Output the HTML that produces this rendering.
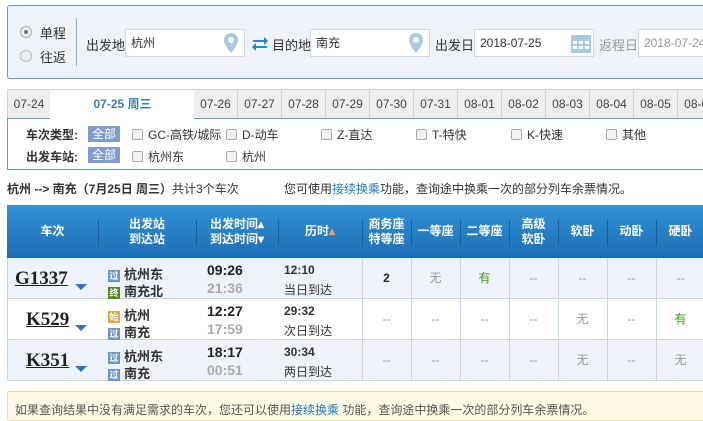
<!DOCTYPE html><html><head><meta charset="utf-8"><style>
*{margin:0;padding:0;box-sizing:border-box}
body{width:703px;height:418px;overflow:hidden;background:#fff;font-family:"Liberation Sans","Noto Sans CJK SC",sans-serif;font-size:12px;color:#333;position:relative}
.a{position:absolute;white-space:nowrap}
.inp{position:absolute;height:28px;border:1px solid #cfd8e3;background:#fff;font-size:12px;line-height:26px;padding-left:5px;color:#333}
.tab{position:absolute;top:89px;height:30px;border:1px solid #c9d3dd;border-left:none;background:#eee;width:44px;text-align:center;line-height:28px;color:#444;font-size:12px}
.cb{display:inline-block;width:11px;height:11px;border:1px solid #aaa;border-radius:2px;background:#f2f2f2;vertical-align:-1px;margin-right:5px}
.badge{position:absolute;background:#7f9bd0;color:#fff;width:32px;height:16px;line-height:16px;text-align:center;font-size:12px}
.hd{position:absolute;top:205px;height:53px;color:#fff;font-weight:bold;font-size:12px;text-align:center;line-height:15px;display:flex;align-items:center;justify-content:center}
.sep{position:absolute;top:220px;height:26px;width:1px;background:#1a5f9a}
.row{position:absolute;left:7px;width:700px;height:41px;border-bottom:1px solid #c8d6e4}
.cell{position:absolute;text-align:center;width:49px;line-height:40px;color:#999;font-size:12px}
.vl{position:absolute;width:1px;background:#c8d6e4;top:258px;height:123px}
.tag{display:inline-block;width:12px;height:12px;font-size:9px;line-height:12px;text-align:center;color:#fff;vertical-align:0px;margin-right:4px}
.tn{position:absolute;font-family:"Liberation Serif",serif;font-weight:bold;font-size:19px;color:#222;text-decoration:underline}
.tri{position:absolute;width:0;height:0;border-left:6px solid transparent;border-right:6px solid transparent;border-top:6px solid #2a78c8}
.t1{position:absolute;font-weight:bold;font-size:14px;color:#222}
.t2{position:absolute;font-weight:bold;font-size:14px;color:#aaa}
</style></head><body>
<div class="a" style="left:7px;top:5px;width:710px;height:74px;background:#eef2f9;border:1px solid #5a9cc4;border-radius:3px"></div>
<div class="a" style="left:20px;top:26px;width:12px;height:12px;border-radius:50%;border:1px solid #aaa;background:#eee"></div>
<div class="a" style="left:24px;top:30px;width:4px;height:4px;border-radius:50%;background:#777"></div>
<div class="a" style="left:20px;top:50px;width:12px;height:12px;border-radius:50%;border:1px solid #bbb;background:#eee"></div>
<div class="a" style="left:40px;top:23px;font-size:13px">单程</div>
<div class="a" style="left:40px;top:47px;font-size:13px">往返</div>
<div class="a" style="left:76px;top:18px;width:1px;height:48px;background:#7db0cf"></div>
<div class="a" style="left:86px;top:35px;font-size:13px">出发地</div>
<div class="inp" style="left:125px;top:29px;width:120px">杭州</div>
<svg class="a" style="left:224px;top:33px" width="14" height="20" viewBox="0 0 14 20"><path d="M7 0C3 0 0 3 0 7c0 5 7 13 7 13s7-8 7-13c0-4-3-7-7-7z" fill="#a9c9e3"/><circle cx="7" cy="7" r="3" fill="#fff"/></svg>
<svg class="a" style="left:251px;top:36px" width="18" height="15" viewBox="0 0 18 15"><path d="M2 4h11V1l4 4-4 4V6H2z M16 10H5V7l-4 4 4 4v-3h11z" fill="#1b8ac8"/></svg>
<div class="a" style="left:272px;top:35px;font-size:13px">目的地</div>
<div class="inp" style="left:310px;top:29px;width:120px">南充</div>
<svg class="a" style="left:409px;top:33px" width="14" height="20" viewBox="0 0 14 20"><path d="M7 0C3 0 0 3 0 7c0 5 7 13 7 13s7-8 7-13c0-4-3-7-7-7z" fill="#a9c9e3"/><circle cx="7" cy="7" r="3" fill="#fff"/></svg>
<div class="a" style="left:435px;top:35px;font-size:13px">出发日</div>
<div class="inp" style="left:474px;top:29px;width:120px">2018-07-25</div>
<svg class="a" style="left:571px;top:33px" width="20" height="20" viewBox="0 0 20 20"><rect x="0" y="2" width="20" height="18" fill="#a9c9e3"/><g fill="#fff"><rect x="2" y="8" width="4" height="3"/><rect x="8" y="8" width="4" height="3"/><rect x="14" y="8" width="4" height="3"/><rect x="2" y="13" width="4" height="3"/><rect x="8" y="13" width="4" height="3"/><rect x="14" y="13" width="4" height="3"/></g></svg>
<div class="a" style="left:599px;top:35px;font-size:13px;color:#999">返程日</div>
<div class="inp" style="left:638px;top:29px;width:80px;color:#999">2018-07-24</div>

<div class="tab" style="left:7px;width:44px;border-left:1px solid #c9d3dd">07-24</div>
<div class="a" style="left:50px;top:89px;width:145px;height:31px;background:#fff;border-top:1px solid #c9d3dd;text-align:center;line-height:28px;color:#3a7fb8;font-weight:bold;font-size:12px">07-25 周三</div>
<div class="tab" style="left:194px">07-26</div><div class="tab" style="left:238px">07-27</div><div class="tab" style="left:282px">07-28</div><div class="tab" style="left:326px">07-29</div><div class="tab" style="left:370px">07-30</div><div class="tab" style="left:414px">07-31</div><div class="tab" style="left:458px">08-01</div><div class="tab" style="left:502px">08-02</div><div class="tab" style="left:546px">08-03</div><div class="tab" style="left:590px">08-04</div><div class="tab" style="left:634px">08-05</div><div class="tab" style="left:678px">08-06</div>
<div class="a" style="left:7px;top:118px;width:710px;height:52px;border:1px solid #5a9cc4;border-top:none"></div>
<div class="a" style="left:194px;top:118px;width:520px;height:1px;background:#5a9cc4"></div>
<div class="a" style="left:7px;top:118px;width:43px;height:1px;background:#5a9cc4"></div>
<div class="a" style="left:26px;top:126px;font-weight:bold;font-size:12px">车次类型:</div>
<div class="badge" style="left:88px;top:126px">全部</div>
<div class="a" style="left:132px;top:126px"><span class="cb"></span>GC-高铁/城际</div>
<div class="a" style="left:226px;top:126px"><span class="cb"></span>D-动车</div>
<div class="a" style="left:321px;top:126px"><span class="cb"></span>Z-直达</div>
<div class="a" style="left:416px;top:126px"><span class="cb"></span>T-特快</div>
<div class="a" style="left:511px;top:126px"><span class="cb"></span>K-快速</div>
<div class="a" style="left:606px;top:126px"><span class="cb"></span>其他</div>
<div class="a" style="left:26px;top:148px;font-weight:bold;font-size:12px">出发车站:</div>
<div class="badge" style="left:88px;top:147px">全部</div>
<div class="a" style="left:132px;top:148px"><span class="cb"></span>杭州东</div>
<div class="a" style="left:226px;top:148px"><span class="cb"></span>杭州</div>
<div class="a" style="left:7px;top:180px;font-size:12px"><b>杭州 --&gt; 南充（7月25日 周三）</b>共计3个车次</div>
<div class="a" style="left:284px;top:180px;font-size:12px">您可使用<span style="color:#1a7ac8">接续换乘</span>功能，查询途中换乘一次的部分列车余票情况。</div>

<div class="a" style="left:7px;top:205px;width:700px;height:53px;background:linear-gradient(#3293d8,#1c6eb4)"></div>
<div class="hd" style="left:7px;width:91px">车次</div>
<div class="hd" style="left:98px;width:98px">出发站<br>到达站</div>
<div class="hd" style="left:196px;width:82px">出发时间▴<br>到达时间▾</div>
<div class="hd" style="left:278px;width:84px">历时<span style="color:#f0a050">▴</span></div>
<div class="hd" style="left:362px;width:49px">商务座<br>特等座</div>
<div class="hd" style="left:411px;width:49px">一等座</div>
<div class="hd" style="left:460px;width:49px">二等座</div>
<div class="hd" style="left:509px;width:49px">高级<br>软卧</div>
<div class="hd" style="left:558px;width:49px">软卧</div>
<div class="hd" style="left:607px;width:49px">动卧</div>
<div class="hd" style="left:656px;width:49px">硬卧</div>
<div class="sep" style="left:98px"></div><div class="sep" style="left:196px"></div><div class="sep" style="left:278px"></div><div class="sep" style="left:362px"></div><div class="sep" style="left:411px"></div><div class="sep" style="left:460px"></div><div class="sep" style="left:509px"></div><div class="sep" style="left:558px"></div><div class="sep" style="left:607px"></div><div class="sep" style="left:656px"></div>

<div class="row" style="top:258px;background:#eef2fa"></div>
<div class="row" style="top:299px;background:#fff"></div>
<div class="row" style="top:340px;background:#eef2fa"></div>
<div class="a" style="left:7px;top:258px;width:1px;height:123px;background:#c8d6e4"></div>
<div class="vl" style="left:362px"></div><div class="vl" style="left:411px"></div><div class="vl" style="left:460px"></div><div class="vl" style="left:509px"></div><div class="vl" style="left:558px"></div><div class="vl" style="left:607px"></div><div class="vl" style="left:656px"></div>

<div class="tn" style="left:15px;top:268px">G1337</div><div class="tri" style="left:75px;top:284px"></div>
<div class="tn" style="left:26px;top:309px">K529</div><div class="tri" style="left:75px;top:325px"></div>
<div class="tn" style="left:26px;top:350px">K351</div><div class="tri" style="left:75px;top:366px"></div>

<div class="a" style="left:108px;top:264px;font-weight:bold;font-size:13px"><span class="tag" style="background:#6d95c9">过</span>杭州东</div>
<div class="a" style="left:108px;top:281px;font-weight:bold;font-size:13px"><span class="tag" style="background:#4f8a1a">终</span>南充北</div>
<div class="a" style="left:108px;top:305px;font-weight:bold;font-size:13px"><span class="tag" style="background:#d9a84a">始</span>杭州</div>
<div class="a" style="left:108px;top:322px;font-weight:bold;font-size:13px"><span class="tag" style="background:#6d95c9">过</span>南充</div>
<div class="a" style="left:108px;top:346px;font-weight:bold;font-size:13px"><span class="tag" style="background:#6d95c9">过</span>杭州东</div>
<div class="a" style="left:108px;top:363px;font-weight:bold;font-size:13px"><span class="tag" style="background:#6d95c9">过</span>南充</div>

<div class="t1" style="left:207px;top:262px">09:26</div><div class="t2" style="left:207px;top:280px">21:36</div>
<div class="t1" style="left:207px;top:303px">12:27</div><div class="t2" style="left:207px;top:321px">17:59</div>
<div class="t1" style="left:207px;top:344px">18:17</div><div class="t2" style="left:207px;top:362px">00:51</div>
<div class="a" style="left:284px;top:263px;font-weight:bold;font-size:12px">12:10</div><div class="a" style="left:284px;top:281px">当日到达</div>
<div class="a" style="left:284px;top:304px;font-weight:bold;font-size:12px">29:32</div><div class="a" style="left:284px;top:322px">次日到达</div>
<div class="a" style="left:284px;top:345px;font-weight:bold;font-size:12px">30:34</div><div class="a" style="left:284px;top:363px">两日到达</div>

<div class="cell" style="left:362px;top:258px;color:#222;font-weight:bold">2</div>
<div class="cell" style="left:411px;top:258px">无</div>
<div class="cell" style="left:460px;top:258px;color:#3a9a1a">有</div>
<div class="cell" style="left:509px;top:258px">--</div><div class="cell" style="left:558px;top:258px">--</div><div class="cell" style="left:607px;top:258px">--</div><div class="cell" style="left:656px;top:258px">--</div>
<div class="cell" style="left:362px;top:299px">--</div><div class="cell" style="left:411px;top:299px">--</div><div class="cell" style="left:460px;top:299px">--</div><div class="cell" style="left:509px;top:299px">--</div><div class="cell" style="left:558px;top:299px">无</div><div class="cell" style="left:607px;top:299px">--</div><div class="cell" style="left:656px;top:299px;color:#3a9a1a">有</div>
<div class="cell" style="left:362px;top:340px">--</div><div class="cell" style="left:411px;top:340px">--</div><div class="cell" style="left:460px;top:340px">--</div><div class="cell" style="left:509px;top:340px">--</div><div class="cell" style="left:558px;top:340px">无</div><div class="cell" style="left:607px;top:340px">--</div><div class="cell" style="left:656px;top:340px">无</div>

<div class="a" style="left:7px;top:391px;width:710px;height:30px;background:#fffbe6;border:1px solid #f0dc7a;border-radius:3px;padding:9px 0 0 7px;color:#555;font-size:12px">如果查询结果中没有满足需求的车次，您还可以使用<span style="color:#1a7ac8">接续换乘</span> 功能，查询途中换乘一次的部分列车余票情况。</div>
</body></html>
